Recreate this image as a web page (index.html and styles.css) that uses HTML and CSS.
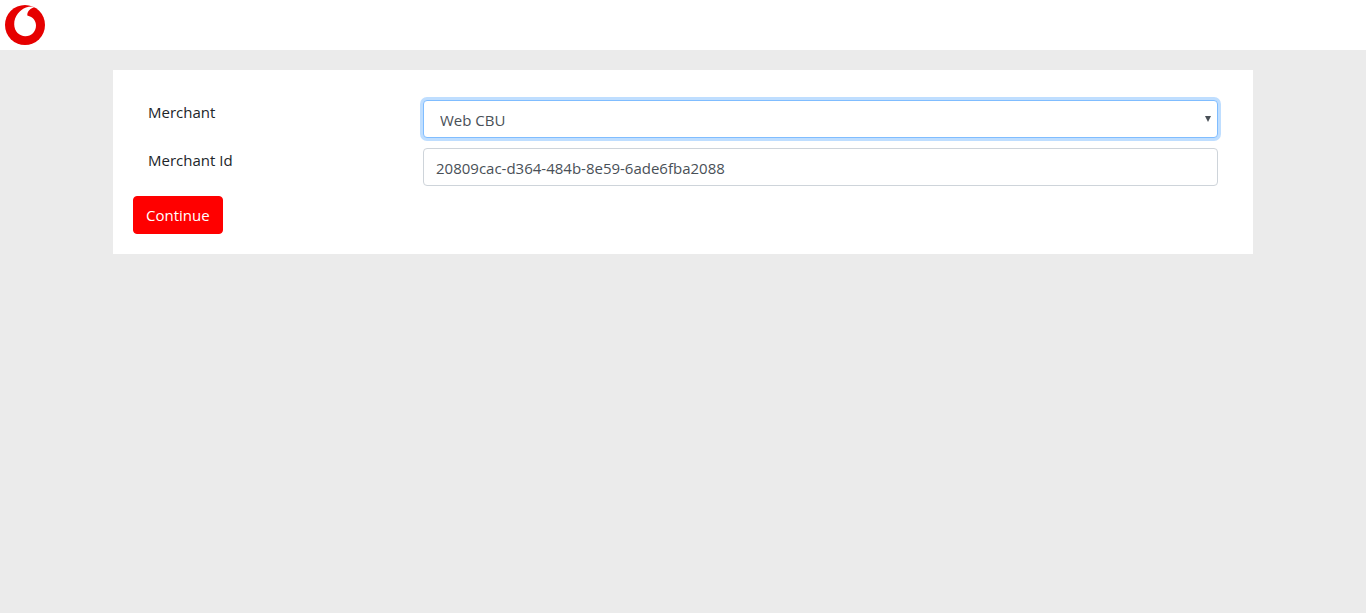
FILE: index.html
```html
<!DOCTYPE html>
<html lang="en">
<head>
<meta charset="utf-8">
<meta name="viewport" content="width=device-width, initial-scale=1">
<title>Merchant</title>
<link rel="stylesheet" href="styles.css">
</head>
<body>
<header class="topbar">
  <svg class="logo" viewBox="0 0 40 40" role="img" aria-label="Vodafone">
    <circle cx="20" cy="20" r="20" fill="#e60000"/>
    <path fill="#fff" d="M20.3 31.2C14.500 31.200 9.200 26.600 9.200 19.300C9.200 11.300 14.800 4.800 21 2.600C23.700 1.600 26.700 1.300 29.800 1.900C25.600 3 22.300 6.200 22.300 9.800V10.400C28.200 11.800 31 15.800 31 20.500C31 26.700 26.500 31.200 20.300 31.200Z"/>
  </svg>
</header>
<main class="page">
  <form class="card">
    <div class="row">
      <label class="label" for="merchant">Merchant</label>
      <div class="field">
        <select class="control select focused" id="merchant">
          <option>Web CBU</option>
        </select>
        <svg class="arrow" viewBox="0 0 6 6" aria-hidden="true"><path fill="#495057" d="M0 0H6L3 6Z"/></svg>
      </div>
    </div>
    <div class="row">
      <label class="label" for="merchant-id">Merchant Id</label>
      <div class="field">
        <input class="control" id="merchant-id" type="text" value="20809cac-d364-484b-8e59-6ade6fba2088">
      </div>
    </div>
    <button class="button" type="submit">Continue</button>
  </form>
</main>
</body>
</html>
```

FILE: styles.css
```css
* {
  box-sizing: border-box;
}

body {
  margin: 0;
  background: #ebebeb;
  color: #212529;
  font-family: "Segoe UI", "Open Sans", "Noto Sans", sans-serif;
  font-size: 15px;
  line-height: 24px;
}

.topbar {
  padding: 5px;
  background: #fff;
}

.logo {
  display: block;
  width: 40px;
  height: 40px;
}

.page {
  max-width: 1140px;
  margin: 20px auto;
}

.card {
  padding: 30px 20px 20px;
  background: #fff;
}

.row {
  display: grid;
  grid-template-columns: 1fr 3fr;
  align-items: start;
  margin-bottom: 10px;
}

.label {
  padding: 0 15px;
}

.field {
  position: relative;
  margin: 0 15px;
}

.control {
  display: block;
  width: 100%;
  height: 38px;
  padding: 7px 12px 5px;
  border: 1px solid #ced4da;
  border-radius: 4px;
  outline: 0;
  background: #fff;
  color: #495057;
  font: inherit;
}

.select {
  appearance: none;
  padding: 7px 16px 5px;
}

.control:focus,
.focused {
  border-color: #80bdff;
  box-shadow: 0 0 0 3px #bfdeff;
}

.arrow {
  position: absolute;
  top: 16px;
  right: 7px;
  width: 6px;
  height: 6px;
  pointer-events: none;
}

.button {
  display: block;
  padding: 6px 12px;
  border: 1px solid #f00;
  border-radius: 4px;
  background: #f00;
  color: #fff;
  font: inherit;
  cursor: pointer;
}
```
